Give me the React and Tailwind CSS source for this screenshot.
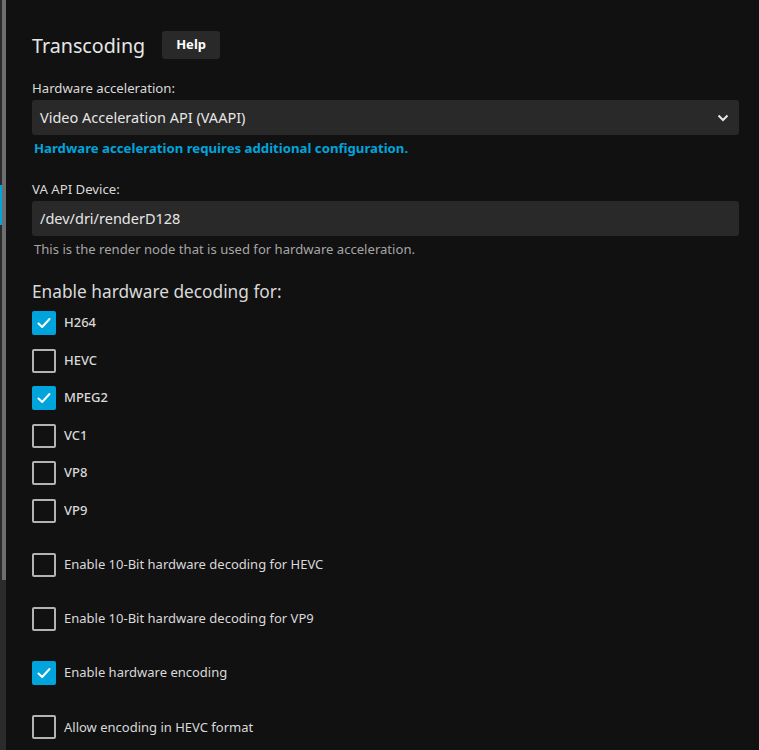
import React from 'react';

const codecs = [
  { name: 'H264', checked: true },
  { name: 'HEVC', checked: false },
  { name: 'MPEG2', checked: true },
  { name: 'VC1', checked: false },
  { name: 'VP8', checked: false },
  { name: 'VP9', checked: false },
];

const extras = [
  { name: 'Enable 10-Bit hardware decoding for HEVC', checked: false },
  { name: 'Enable 10-Bit hardware decoding for VP9', checked: false },
  { name: 'Enable hardware encoding', checked: true },
  { name: 'Allow encoding in HEVC format', checked: false },
];

const Checkbox = ({ checked }) =>
  checked ? (
    <div className="w-6 h-6 rounded-[2px] bg-[#00a4dc] flex items-center justify-center flex-shrink-0">
      <svg width="16" height="16" viewBox="0 0 16 16" fill="none">
        <path d="M2.5 8.5 L6.2 12 L13.5 4" stroke="white" strokeWidth="2" strokeLinecap="round" strokeLinejoin="round" />
      </svg>
    </div>
  ) : (
    <div className="w-6 h-6 rounded-[2px] border-2 border-[#b3b3b3] flex-shrink-0" />
  );

export default function App() {
  return (
    <div
      className="w-[759px] h-[750px] bg-[#111111] flex overflow-hidden text-[#e6e6e6]"
      style={{ fontFamily: '"Noto Sans", "Open Sans", sans-serif' }}
    >
      {/* scrollbar */}
      <div className="relative w-[6px] h-full bg-[#2b2b2b] flex-shrink-0">
        <div className="ml-[2px] w-[4px] h-[580px] bg-[#6e6e6e]" />
        <div className="absolute left-0 top-[185px] w-[2px] h-[40px] bg-[#00a4dc]" />
      </div>

      <div className="flex-1 pl-[26px] pr-[20px]">
        {/* header */}
        <div className="flex items-center mt-[31px] h-[28px]">
          <h2 className="text-[19.7px] leading-none text-[#e6e6e6] pt-[2px]">Transcoding</h2>
          <button className="ml-[17px] h-[28px] px-[14px] rounded-[3px] bg-[#292929] text-[13px] font-bold text-white">
            Help
          </button>
        </div>

        {/* hardware acceleration */}
        <div className="mt-[20px] text-[13.2px] leading-[18px] text-[#d9d9d9]">Hardware acceleration:</div>
        <div className="mt-[3px] h-[35px] rounded-[3px] bg-[#292929] flex items-center justify-between pl-[8px] pr-[10px]">
          <span className="text-[14.5px] text-[#e6e6e6]">Video Acceleration API (VAAPI)</span>
          <svg width="12" height="8" viewBox="0 0 12 8" fill="none">
            <path d="M1.5 1.5 L6 6 L10.5 1.5" stroke="#e6e6e6" strokeWidth="2" />
          </svg>
        </div>
        <div className="mt-[4px] pl-[2px] text-[13.2px] leading-[18px] font-bold text-[#00a4dc]">
          Hardware acceleration requires additional configuration.
        </div>

        {/* device */}
        <div className="mt-[23px] text-[13.2px] leading-[18px] text-[#d9d9d9]">VA API Device:</div>
        <div className="mt-[3px] h-[35px] rounded-[3px] bg-[#292929] flex items-center pl-[8px]">
          <span className="text-[14.5px] text-[#e6e6e6]">/dev/dri/renderD128</span>
        </div>
        <div className="mt-[4px] pl-[2px] text-[13.1px] leading-[18px] text-[#a6a6a6]">
          This is the render node that is used for hardware acceleration.
        </div>

        {/* decoding */}
        <div className="mt-[23px] text-[17.3px] leading-[22px] text-[#d9d9d9]">Enable hardware decoding for:</div>
        <div className="mt-[8px] flex flex-col gap-[13.5px]">
          {codecs.map((c) => (
            <div key={c.name} className="flex items-center gap-[8px]">
              <Checkbox checked={c.checked} />
              <span className="text-[13px] font-medium text-[#d9d9d9]">{c.name}</span>
            </div>
          ))}
        </div>

        <div className="mt-[30px] flex flex-col gap-[30.3px]">
          {extras.map((c) => (
            <div key={c.name} className="flex items-center gap-[8px]">
              <Checkbox checked={c.checked} />
              <span className="text-[13px] text-[#d9d9d9]">{c.name}</span>
            </div>
          ))}
        </div>
      </div>
    </div>
  );
}
